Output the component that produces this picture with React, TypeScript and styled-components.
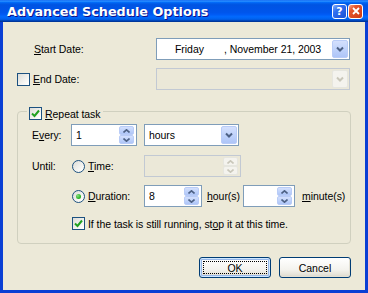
import { createGlobalStyle, styled } from "styled-components";

const GlobalStyle = createGlobalStyle`
  html, body { margin: 0; padding: 0; }
  body {
    font-family: "Liberation Sans", Arial, sans-serif;
    font-size: 10.5px;
    letter-spacing: -0.05px;
    color: #000;
  }
  * { box-sizing: border-box; }
`;

const Window = styled.div`
  width: 368px;
  height: 293px;
  display: flex;
  flex-direction: column;
  background: #0a3fd4;
`;

const TitleBar = styled.div`
  height: 22px;
  flex: 0 0 22px;
  display: flex;
  align-items: center;
  padding: 0 5px 0 7px;
  background: linear-gradient(
    180deg,
    #0058ee 0%,
    #3593ff 4%,
    #288eff 6%,
    #127dff 8%,
    #036ffc 10%,
    #0262ee 14%,
    #0057e5 20%,
    #0054e3 24%,
    #0055eb 56%,
    #005bf5 66%,
    #026afe 76%,
    #0062ef 86%,
    #0052d6 92%,
    #0040ab 94%,
    #003092 100%
  );
`;

const Title = styled.div`
  flex: 1;
  font-family: "DejaVu Sans", sans-serif;
  font-weight: bold;
  font-size: 12.8px;
  letter-spacing: 0;
  color: #fff;
  text-shadow: 1px 1px #0f1089;
  padding-top: 1px;
`;

const TitleButtons = styled.div`
  display: flex;
  gap: 1px;
`;

const CaptionButton = styled.div<{ $close?: boolean }>`
  width: 15px;
  height: 15px;
  border: 1px solid #fff;
  border-radius: 3px;
  display: flex;
  align-items: center;
  justify-content: center;
  color: #fff;
  font-family: "DejaVu Sans", sans-serif;
  font-weight: bold;
  font-size: 11px;
  background: ${(p) =>
    p.$close
      ? "linear-gradient(135deg, #f3a087 0%, #e5552c 30%, #cc3a14 100%)"
      : "linear-gradient(135deg, #86aef8 0%, #2f6ff0 35%, #1a4fd4 100%)"};
`;

const Body = styled.div`
  flex: 1;
  margin: 0 3px 3px 3px;
  background: #ece9d8;
  display: flex;
  flex-direction: column;
  padding: 16px 14px 0 14px;
`;

const FieldRow = styled.div<{ $gap?: number }>`
  display: grid;
  grid-template-columns: 139px 194px;
  align-items: center;
  height: 22px;
  margin-top: ${(p) => p.$gap ?? 0}px;
`;

const LabelCell = styled.div<{ $indent?: number; $width?: number }>`
  display: flex;
  align-items: center;
  gap: 3px;
  padding-left: ${(p) => p.$indent ?? 0}px;
  ${(p) => (p.$width ? `width: ${p.$width}px; flex: 0 0 ${p.$width}px;` : "")}
  white-space: nowrap;
`;

const U = styled.span`
  text-decoration: underline;
`;

const BoxFrame = styled.div<{ $width: number; $disabled?: boolean }>`
  width: ${(p) => p.$width}px;
  height: 22px;
  flex: 0 0 auto;
  border: 1px solid ${(p) => (p.$disabled ? "#c2c9d3" : "#7f9db9")};
  background: ${(p) => (p.$disabled ? "#ebe8d8" : "#fff")};
  display: flex;
  align-items: center;
  padding: 1px;
`;

const BoxText = styled.div<{ $pad?: number }>`
  flex: 1;
  padding-left: ${(p) => p.$pad ?? 3}px;
  white-space: nowrap;
  display: flex;
`;

const DayPart = styled.span`
  width: 49px;
`;

const DropButton = styled.div<{ $disabled?: boolean }>`
  width: 16px;
  height: 18px;
  border: 1px solid ${(p) => (p.$disabled ? "#e6e6df" : "#b9ccf7")};
  border-radius: 2px;
  background: ${(p) =>
    p.$disabled
      ? "#f4f3ee"
      : "linear-gradient(180deg, #d4e0fd 0%, #c0d3fb 50%, #aec5f7 100%)"};
  display: flex;
  align-items: center;
  justify-content: center;
`;

const SpinColumn = styled.div`
  width: 15px;
  height: 18px;
  display: flex;
  flex-direction: column;
  margin-right: 1px;
`;

const SpinHalf = styled.div<{ $disabled?: boolean }>`
  flex: 1;
  border: 1px solid ${(p) => (p.$disabled ? "#e6e6df" : "#b9ccf7")};
  border-radius: 2px;
  background: ${(p) =>
    p.$disabled
      ? "#f4f3ee"
      : "linear-gradient(180deg, #d4e0fd 0%, #c0d3fb 50%, #aec5f7 100%)"};
  display: flex;
  align-items: center;
  justify-content: center;
`;

const Group = styled.div`
  position: relative;
  margin-top: 21px;
  width: 334px;
  height: 133px;
  border: 1px solid #d0d0bf;
  border-radius: 4px;
  padding: 12px 0 0 14px;
  display: flex;
  flex-direction: column;
`;

const Legend = styled.div`
  position: absolute;
  left: 9px;
  top: -5px;
  padding: 0 2px;
  background: #ece9d8;
  display: flex;
  align-items: center;
  gap: 3px;
  height: 13px;
`;

const GroupRow = styled.div<{ $gap?: number }>`
  display: flex;
  align-items: center;
  height: 22px;
  margin-top: ${(p) => p.$gap ?? 0}px;
`;

const CheckRow = styled.div`
  display: flex;
  align-items: center;
  gap: 3px;
  height: 13px;
  margin-top: 10px;
  padding-left: 40px;
`;

const Spacer = styled.div<{ $width: number }>`
  flex: 0 0 ${(p) => p.$width}px;
`;

const CheckBoxBox = styled.div`
  width: 13px;
  height: 13px;
  flex: 0 0 13px;
  border: 1px solid #1c5180;
  background: linear-gradient(135deg, #dcdcd7 0%, #fbfbf9 80%, #fff 100%);
  display: flex;
  align-items: center;
  justify-content: center;
`;

const RadioCircle = styled.div`
  width: 13px;
  height: 13px;
  flex: 0 0 13px;
  border: 1px solid #1c5180;
  border-radius: 50%;
  background: linear-gradient(135deg, #dcdcd7 0%, #fbfbf9 80%, #fff 100%);
  display: flex;
  align-items: center;
  justify-content: center;
`;

const RadioDot = styled.div`
  width: 5px;
  height: 5px;
  border-radius: 50%;
  background: radial-gradient(circle at 35% 35%, #88e07f 0%, #2cb52a 60%, #129010 100%);
`;

const ButtonRow = styled.div`
  display: flex;
  justify-content: flex-end;
  gap: 8px;
  margin-top: 13px;
`;

const PushButton = styled.div<{ $default?: boolean }>`
  width: 72px;
  height: 21px;
  border: 1px solid #003c74;
  border-radius: 3px;
  background: linear-gradient(180deg, #ffffff 0%, #f4f3ee 60%, #e4e1d6 90%, #d6d0c5 100%);
  display: flex;
  align-items: center;
  justify-content: center;
  position: relative;
  ${(p) =>
    p.$default
      ? `box-shadow: inset 0 0 0 1px #cee7ff, inset 0 0 0 2px #98b8ea;`
      : `box-shadow: inset -1px -1px 0 #e3e0d3;`}
`;

const FocusRing = styled.span`
  position: absolute;
  inset: 3px;
  border: 1px dotted #000;
`;

function Chevron({ disabled }: { disabled?: boolean }) {
  return (
    <svg width="8" height="6" viewBox="0 0 8 6">
      <polyline
        points="1,1.5 4,4.5 7,1.5"
        fill="none"
        stroke={disabled ? "#c9c7ba" : "#4d6185"}
        strokeWidth="2"
      />
    </svg>
  );
}

function Arrow({ up, disabled }: { up?: boolean; disabled?: boolean }) {
  return (
    <svg width="7" height="4" viewBox="0 0 7 4">
      <polyline
        points={up ? "0.5,3.5 3.5,0.8 6.5,3.5" : "0.5,0.5 3.5,3.2 6.5,0.5"}
        fill="none"
        stroke={disabled ? "#c9c7ba" : "#4d6185"}
        strokeWidth="1.6"
      />
    </svg>
  );
}

function CheckBox({ checked }: { checked?: boolean }) {
  return (
    <CheckBoxBox>
      {checked && (
        <svg width="9" height="9" viewBox="0 0 9 9">
          <polyline points="1,4.5 3.5,7 8,1.5" fill="none" stroke="#21a121" strokeWidth="2" />
        </svg>
      )}
    </CheckBoxBox>
  );
}

function Radio({ checked }: { checked?: boolean }) {
  return <RadioCircle>{checked && <RadioDot />}</RadioCircle>;
}

function SpinBox({ width, value, disabled }: { width: number; value?: string; disabled?: boolean }) {
  return (
    <BoxFrame $width={width} $disabled={disabled}>
      <BoxText>{value}</BoxText>
      <SpinColumn>
        <SpinHalf $disabled={disabled}>
          <Arrow up disabled={disabled} />
        </SpinHalf>
        <SpinHalf $disabled={disabled}>
          <Arrow disabled={disabled} />
        </SpinHalf>
      </SpinColumn>
    </BoxFrame>
  );
}

function DropDown({ width, disabled, children }: { width: number; disabled?: boolean; children?: React.ReactNode }) {
  return (
    <BoxFrame $width={width} $disabled={disabled}>
      {children ?? <BoxText />}
      <DropButton $disabled={disabled}>
        <Chevron disabled={disabled} />
      </DropButton>
    </BoxFrame>
  );
}

export default function App() {
  return (
    <>
      <GlobalStyle />
      <Window>
        <TitleBar>
          <Title>Advanced Schedule Options</Title>
          <TitleButtons>
            <CaptionButton>?</CaptionButton>
            <CaptionButton $close>
              <svg width="8" height="8" viewBox="0 0 8 8">
                <path d="M1 1 L7 7 M7 1 L1 7" stroke="#fff" strokeWidth="1.8" />
              </svg>
            </CaptionButton>
          </TitleButtons>
        </TitleBar>
        <Body>
          <FieldRow>
            <LabelCell $indent={17}>
              <span>
                <U>S</U>tart Date:
              </span>
            </LabelCell>
            <DropDown width={194}>
              <BoxText $pad={17}>
                <DayPart>Friday</DayPart>
                <span>, November 21, 2003</span>
              </BoxText>
            </DropDown>
          </FieldRow>
          <FieldRow $gap={8}>
            <LabelCell>
              <CheckBox />
              <span>
                <U>E</U>nd Date:
              </span>
            </LabelCell>
            <DropDown width={194} disabled />
          </FieldRow>
          <Group>
            <Legend>
              <CheckBox checked />
              <span>
                <U>R</U>epeat task
              </span>
            </Legend>
            <GroupRow>
              <LabelCell $width={39}>
                <span>
                  E<U>v</U>ery:
                </span>
              </LabelCell>
              <SpinBox width={66} value="1" />
              <Spacer $width={7} />
              <DropDown width={95}>
                <BoxText>hours</BoxText>
              </DropDown>
            </GroupRow>
            <GroupRow $gap={9}>
              <LabelCell $width={40}>Until:</LabelCell>
              <LabelCell $width={72}>
                <Radio />
                <span>
                  <U>T</U>ime:
                </span>
              </LabelCell>
              <SpinBox width={97} disabled />
            </GroupRow>
            <GroupRow $gap={8}>
              <Spacer $width={40} />
              <LabelCell $width={72}>
                <Radio checked />
                <span>
                  <U>D</U>uration:
                </span>
              </LabelCell>
              <SpinBox width={58} value="8" />
              <LabelCell $indent={5} $width={41}>
                <span>
                  <U>h</U>our(s)
                </span>
              </LabelCell>
              <SpinBox width={52} />
              <LabelCell $indent={7}>
                <span>
                  <U>m</U>inute(s)
                </span>
              </LabelCell>
            </GroupRow>
            <CheckRow>
              <CheckBox checked />
              <span>
                If the task is still running, st<U>o</U>p it at this time.
              </span>
            </CheckRow>
          </Group>
          <ButtonRow>
            <PushButton $default>
              <FocusRing />
              OK
            </PushButton>
            <PushButton>Cancel</PushButton>
          </ButtonRow>
        </Body>
      </Window>
    </>
  );
}
